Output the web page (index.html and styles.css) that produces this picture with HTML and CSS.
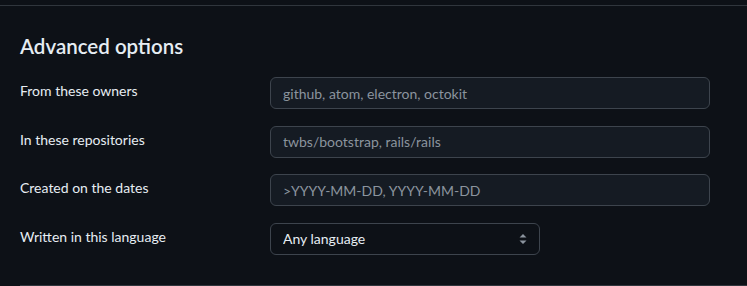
FILE: index.html
```html
<!DOCTYPE html>
<html lang="en">

<head>
    <meta charset="UTF-8">
    <meta name="viewport" content="width=device-width, initial-scale=1.0">
    <title>Advanced search</title>
    <link rel="stylesheet" href="styles.css">
</head>

<body>
    <div class="panel">
        <h2 class="title">Advanced options</h2>

        <div class="row">
            <label class="label" for="owners">From these owners</label>
            <input id="owners" type="text" class="input" placeholder="github, atom, electron, octokit">
        </div>

        <div class="row">
            <label class="label" for="repos">In these repositories</label>
            <input id="repos" type="text" class="input" placeholder="twbs/bootstrap, rails/rails">
        </div>

        <div class="row">
            <label class="label" for="dates">Created on the dates</label>
            <input id="dates" type="text" class="input" placeholder="&gt;YYYY-MM-DD, YYYY-MM-DD">
        </div>

        <div class="row">
            <label class="label" for="lang">Written in this language</label>
            <div class="select-wrap">
                <select id="lang" class="select">
                    <option>Any language</option>
                    <option>JavaScript</option>
                    <option>Python</option>
                    <option>Ruby</option>
                </select>
                <svg class="select-arrow" width="16" height="16" viewBox="0 0 16 16">
                    <path d="M4.5 6.5 8 3l3.5 3.5z M4.5 9.5 8 13l3.5-3.5z" fill="#8b949e" />
                </svg>
            </div>
        </div>
    </div>
    <div class="next-section"></div>
</body>

</html>
```

FILE: styles.css
```css
body {
    font-family: Lato, "Noto Sans", sans-serif;
    margin: 0;
    padding: 0;
    background-color: #0d1117;
    color: #e6edf3;
    font-size: 14px;
}

.panel {
    margin-top: 5px;
    border-top: 1px solid #30363d;
    padding: 25px 20px 13.5px 20px;
}

.title {
    margin: 0 0 16px 0;
    font-size: 20.5px;
    font-weight: 600;
    line-height: 30px;
}

.row {
    display: flex;
    align-items: center;
    margin-bottom: 16.5px;
}

.label {
    width: 250px;
    flex-shrink: 0;
    padding-bottom: 4px;
    line-height: 20px;
}

.input {
    box-sizing: border-box;
    width: 440px;
    height: 32px;
    padding: 0 12px;
    border: 1px solid #3d444d;
    border-radius: 6px;
    background-color: #151b23;
    color: #e6edf3;
    font-family: inherit;
    font-size: 14px;
    outline: none;
}

.input::placeholder {
    color: #8b949e;
}

.select-wrap {
    position: relative;
    width: 270px;
}

.select {
    box-sizing: border-box;
    width: 100%;
    height: 32px;
    padding: 0 32px 0 12px;
    border: 1px solid #3d444d;
    border-radius: 6px;
    background-color: #0d1117;
    color: #e6edf3;
    font-family: inherit;
    font-size: 14px;
    appearance: none;
    -webkit-appearance: none;
    outline: none;
}

.select-arrow {
    position: absolute;
    right: 9px;
    top: 8px;
    pointer-events: none;
}

.next-section {
    margin-left: 20px;
    border-top: 1px solid #30363d;
}
```
